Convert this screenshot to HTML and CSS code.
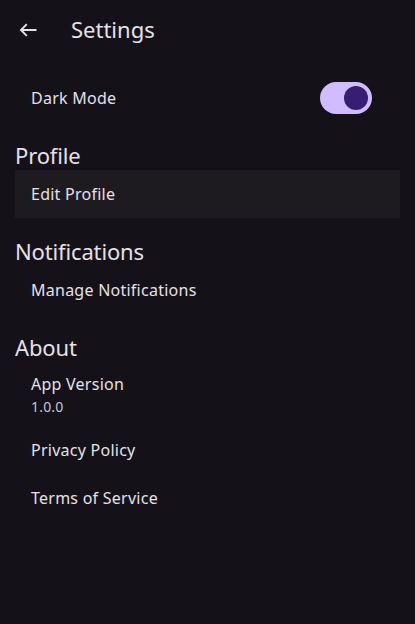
FILE: index.html
```html
<!DOCTYPE html>
<html lang="en">
<head>
<meta charset="utf-8">
<title>Settings</title>
<link rel="stylesheet" href="styles.css">
</head>
<body>
<header class="appbar">
  <div class="back">
    <svg class="back-icon" viewBox="0 0 24 24" width="24" height="24" aria-hidden="true">
      <path d="M20.5 12H5 M10.8 6.2L5 12l5.8 5.8" fill="none" stroke="#E6E0E9" stroke-width="1.9"/>
    </svg>
  </div>
  <h1 class="title">Settings</h1>
</header>
<main class="content">
  <div class="row">
    <span class="label">Dark Mode</span>
    <span class="switch"><span class="thumb"></span></span>
  </div>

  <h2 class="section">Profile</h2>
  <div class="row filled"><span class="label">Edit Profile</span></div>

  <h2 class="section">Notifications</h2>
  <div class="row"><span class="label">Manage Notifications</span></div>

  <h2 class="section">About</h2>
  <div class="row two-line">
    <span class="label">App Version</span>
    <span class="sub">1.0.0</span>
  </div>
  <div class="row"><span class="label">Privacy Policy</span></div>
  <div class="row"><span class="label">Terms of Service</span></div>
</main>
</body>
</html>
```
FILE: styles.css
```css
html, body {
  margin: 0;
  padding: 0;
  background: #141218;
  color: #E6E0E9;
  font-family: "Noto Sans", "Open Sans", sans-serif;
}

.appbar {
  height: 60px;
  display: flex;
  align-items: center;
}

.back {
  width: 55px;
  height: 48px;
  display: flex;
  align-items: center;
  justify-content: center;
}

.back-icon {
  display: block;
}

.title {
  margin: 0 0 3px 16px;
  font-size: 22px;
  line-height: 28px;
  font-weight: 400;
}

.content {
  padding: 14px 15px;
}

.row {
  height: 48px;
  padding: 0 16px;
  display: flex;
  align-items: center;
  justify-content: space-between;
  box-sizing: border-box;
}

.row.filled {
  background: #1D1B20;
}

.row.two-line {
  height: 64px;
  flex-direction: column;
  align-items: flex-start;
  justify-content: center;
}

.label {
  font-size: 16px;
  line-height: 24px;
  letter-spacing: 0.25px;
}

.two-line .label {
  margin-top: 1px;
}

.sub {
  font-size: 14px;
  line-height: 20px;
  letter-spacing: 0.2px;
  margin-top: 1px;
  color: #CAC4D0;
}

.section {
  margin: 19px 0 0 0;
  height: 29px;
  font-size: 22px;
  line-height: 28px;
  font-weight: 400;
  letter-spacing: -0.15px;
}

.switch {
  width: 52px;
  height: 32px;
  border-radius: 16px;
  background: #D0BCFF;
  margin-right: 12px;
  display: flex;
  align-items: center;
  justify-content: flex-end;
  padding: 0 4px;
  box-sizing: border-box;
}

.thumb {
  width: 24px;
  height: 24px;
  border-radius: 50%;
  background: #381E72;
}
```
